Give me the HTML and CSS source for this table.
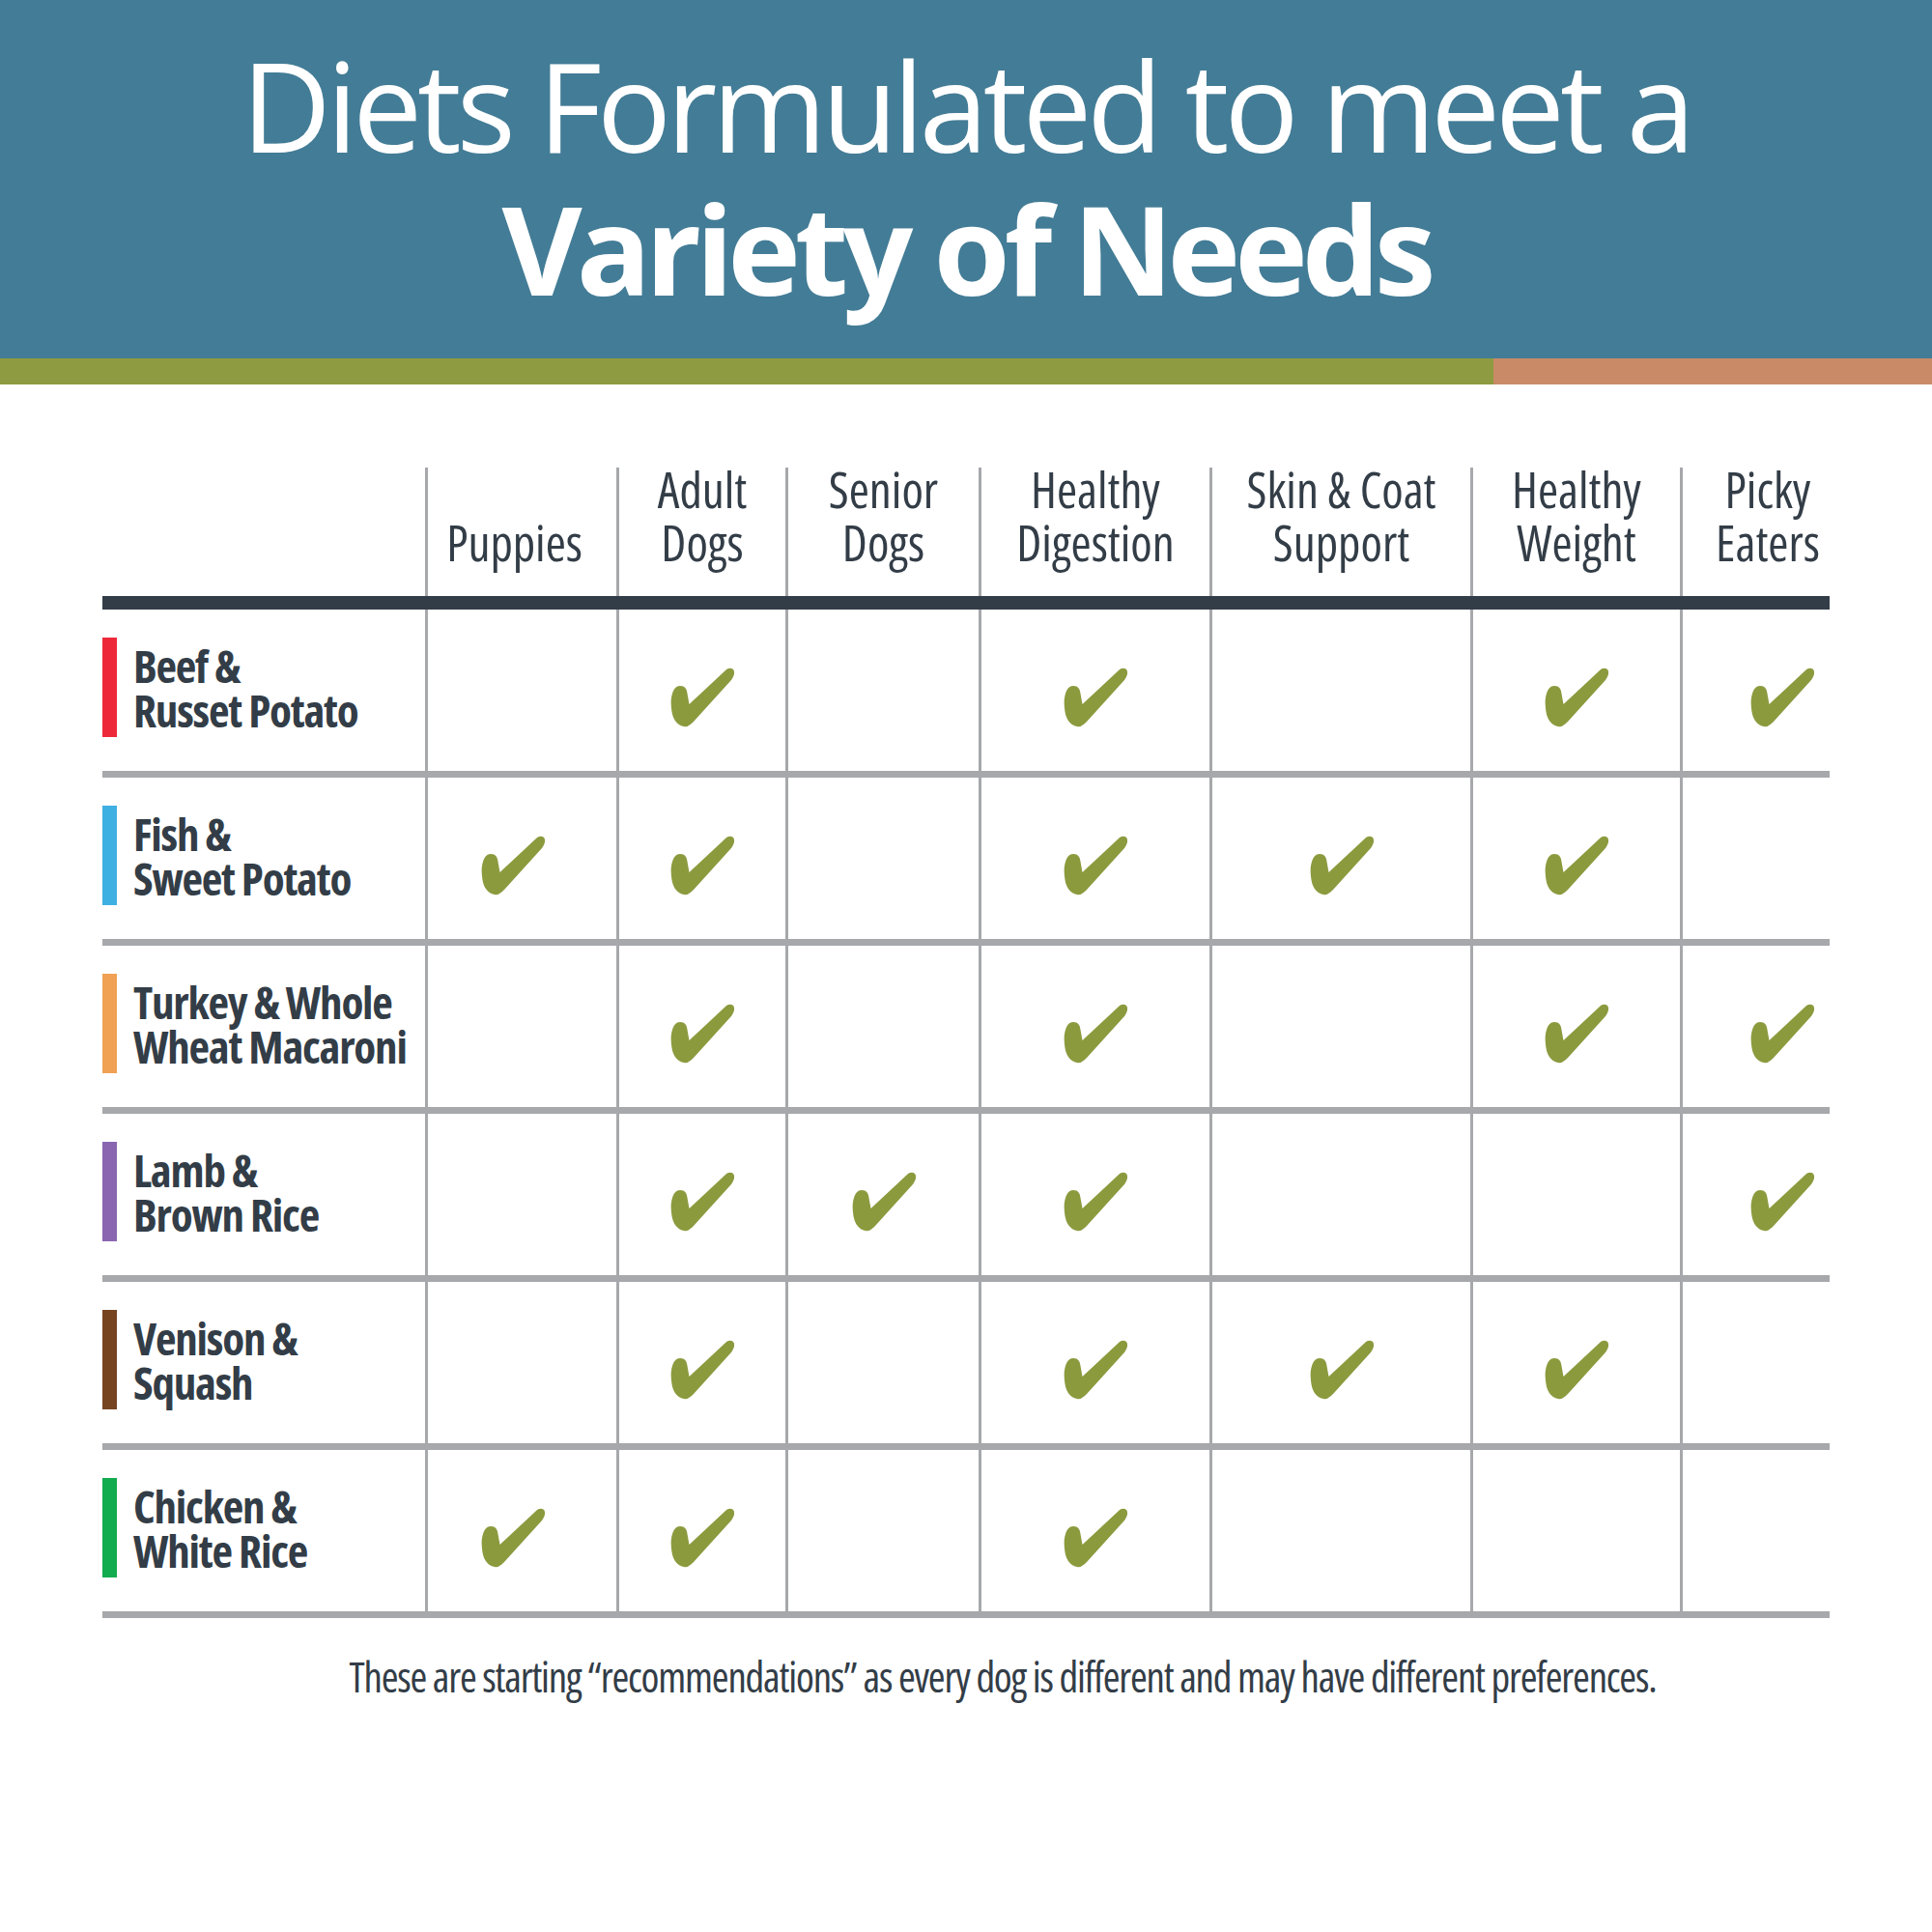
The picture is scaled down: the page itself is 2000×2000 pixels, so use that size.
FILE: index.html
```html
<!DOCTYPE html>
<html lang="en">
<head>
<meta charset="utf-8">
<title>Diets Formulated to meet a Variety of Needs</title>
<link rel="stylesheet" href="styles.css">
</head>
<body>
<svg class="defs" aria-hidden="true">
  <symbol id="chk" viewBox="0 0 66 62">
    <path d="M10 19 C15 19 17 22 17.5 27 L19.5 38 L57 3 C60 0 65 0 66 4 C66.5 7 65 10 63 13 L24 56 C20 60 17 62 14 61 C8 60 3 55 1.5 46 C0.5 40 0 33 2 27 C3.5 22 6 19 10 19 Z"/>
  </symbol>
</svg>

<header class="hero">
  <h1 class="title"><span class="title-light">Diets Formulated to meet a</span><span class="title-bold">Variety of Needs</span></h1>
</header>
<div class="stripe"><div class="stripe-green"></div><div class="stripe-orange"></div></div>

<main class="chart">
  <div class="row head">
    <div class="cell"></div>
    <div class="cell col c-pup">Puppies</div>
    <div class="cell col">Adult<br>Dogs</div>
    <div class="cell col">Senior<br>Dogs</div>
    <div class="cell col">Healthy<br>Digestion</div>
    <div class="cell col">Skin &amp; Coat<br>Support</div>
    <div class="cell col">Healthy<br>Weight</div>
    <div class="cell col c-picky">Picky<br>Eaters</div>
  </div>

  <div class="row body">
    <div class="cell label"><span class="swatch red"></span><span class="name">Beef &amp;<br>Russet Potato</span></div>
    <div class="cell mark c-pup"></div>
    <div class="cell mark"><svg class="check"><use href="#chk"/></svg></div>
    <div class="cell mark"></div>
    <div class="cell mark"><svg class="check"><use href="#chk"/></svg></div>
    <div class="cell mark"></div>
    <div class="cell mark"><svg class="check"><use href="#chk"/></svg></div>
    <div class="cell mark c-picky"><svg class="check"><use href="#chk"/></svg></div>
  </div>

  <div class="row body">
    <div class="cell label"><span class="swatch blue"></span><span class="name">Fish &amp;<br>Sweet Potato</span></div>
    <div class="cell mark c-pup"><svg class="check"><use href="#chk"/></svg></div>
    <div class="cell mark"><svg class="check"><use href="#chk"/></svg></div>
    <div class="cell mark"></div>
    <div class="cell mark"><svg class="check"><use href="#chk"/></svg></div>
    <div class="cell mark"><svg class="check"><use href="#chk"/></svg></div>
    <div class="cell mark"><svg class="check"><use href="#chk"/></svg></div>
    <div class="cell mark c-picky"></div>
  </div>

  <div class="row body">
    <div class="cell label"><span class="swatch orange"></span><span class="name">Turkey &amp; Whole<br>Wheat Macaroni</span></div>
    <div class="cell mark c-pup"></div>
    <div class="cell mark"><svg class="check"><use href="#chk"/></svg></div>
    <div class="cell mark"></div>
    <div class="cell mark"><svg class="check"><use href="#chk"/></svg></div>
    <div class="cell mark"></div>
    <div class="cell mark"><svg class="check"><use href="#chk"/></svg></div>
    <div class="cell mark c-picky"><svg class="check"><use href="#chk"/></svg></div>
  </div>

  <div class="row body">
    <div class="cell label"><span class="swatch purple"></span><span class="name">Lamb &amp;<br>Brown Rice</span></div>
    <div class="cell mark c-pup"></div>
    <div class="cell mark"><svg class="check"><use href="#chk"/></svg></div>
    <div class="cell mark"><svg class="check"><use href="#chk"/></svg></div>
    <div class="cell mark"><svg class="check"><use href="#chk"/></svg></div>
    <div class="cell mark"></div>
    <div class="cell mark"></div>
    <div class="cell mark c-picky"><svg class="check"><use href="#chk"/></svg></div>
  </div>

  <div class="row body">
    <div class="cell label"><span class="swatch brown"></span><span class="name">Venison &amp;<br>Squash</span></div>
    <div class="cell mark c-pup"></div>
    <div class="cell mark"><svg class="check"><use href="#chk"/></svg></div>
    <div class="cell mark"></div>
    <div class="cell mark"><svg class="check"><use href="#chk"/></svg></div>
    <div class="cell mark"><svg class="check"><use href="#chk"/></svg></div>
    <div class="cell mark"><svg class="check"><use href="#chk"/></svg></div>
    <div class="cell mark c-picky"></div>
  </div>

  <div class="row body">
    <div class="cell label"><span class="swatch green"></span><span class="name">Chicken &amp;<br>White Rice</span></div>
    <div class="cell mark c-pup"><svg class="check"><use href="#chk"/></svg></div>
    <div class="cell mark"><svg class="check"><use href="#chk"/></svg></div>
    <div class="cell mark"></div>
    <div class="cell mark"><svg class="check"><use href="#chk"/></svg></div>
    <div class="cell mark"></div>
    <div class="cell mark"></div>
    <div class="cell mark c-picky"></div>
  </div>
</main>

<p class="note">These are starting “recommendations” as every dog is different and may have different preferences.</p>
</body>
</html>
```

FILE: styles.css
```css
html, body {
  margin: 0;
  padding: 0;
  background: #ffffff;
}
body {
  width: 2000px;
  height: 2000px;
  font-family: "Open Sans", "Noto Sans", "DejaVu Sans", sans-serif;
  color: #333d47;
  overflow: hidden;
}
.defs {
  display: block;
  width: 0;
  height: 0;
  overflow: hidden;
}

/* ---------- header ---------- */
.hero {
  height: 371px;
  background: #437c96;
  box-sizing: border-box;
  padding-top: 35px;
}
.title {
  margin: 0;
  color: #ffffff;
  text-align: center;
  font-size: 128px;
  line-height: 148px;
  font-stretch: 100%;
}
.title-light,
.title-bold {
  display: block;
  white-space: nowrap;
}
.title-light {
  font-weight: 400;
  letter-spacing: -5px;
}
.title-bold {
  font-weight: 700;
  letter-spacing: -6px;
}

.stripe {
  display: flex;
  height: 27px;
}
.stripe-green {
  width: 1546px;
  background: #8e9b40;
}
.stripe-orange {
  flex: 1;
  background: #c88a67;
}

/* ---------- chart ---------- */
.chart {
  display: block;
  margin: 86px 0 0 106px;
  width: 1788px;
}
.row {
  display: grid;
  grid-template-columns: 334px 198px 175px 200px 239px 270px 217px 155px;
  grid-template-rows: 100%;
  box-sizing: border-box;
}
.row.head {
  height: 147px;
  border-bottom: 14px solid #333d47;
}
.row.body {
  height: 174px;
  border-bottom: 7px solid #a6a8ab;
}
.cell {
  box-sizing: border-box;
  min-width: 0;
  min-height: 0;
}
.cell + .cell {
  border-left: 3px solid #a6a8ab;
}

.col {
  display: flex;
  align-items: flex-end;
  justify-content: center;
  text-align: center;
  padding-bottom: 28px;
  font-size: 51px;
  line-height: 55px;
  font-weight: 400;
  font-stretch: 75%;
  color: #333d47;
  white-space: nowrap;
}

.label {
  display: flex;
  align-items: center;
  gap: 17px;
  padding-bottom: 6px;
}
.swatch {
  flex: none;
  width: 15px;
  height: 103px;
}
.swatch.red { background: #ed2939; }
.swatch.blue { background: #3fb0e2; }
.swatch.orange { background: #f0a154; }
.swatch.purple { background: #8a66b1; }
.swatch.brown { background: #774420; }
.swatch.green { background: #12ab4e; }

.name {
  font-size: 47px;
  line-height: 46px;
  font-weight: 700;
  font-stretch: 75%;
  letter-spacing: -1.2px;
  color: #333d47;
  white-space: nowrap;
}

.mark {
  display: flex;
  align-items: center;
  justify-content: center;
  padding-top: 14px;
}
.c-pup { padding-right: 20px; }
.c-picky { padding-left: 54px; }
.col.c-pup { padding-right: 16px; }
.col.c-picky { padding-left: 24px; }

.check {
  width: 66px;
  height: 62px;
  fill: #8c9a3e;
}

/* ---------- note ---------- */
.note {
  margin: 35px 0 0 0;
  padding-left: 76px;
  text-align: center;
  font-size: 43px;
  line-height: 52px;
  font-weight: 400;
  font-stretch: 75%;
  letter-spacing: -1.2px;
  color: #333d47;
  white-space: nowrap;
}
```
